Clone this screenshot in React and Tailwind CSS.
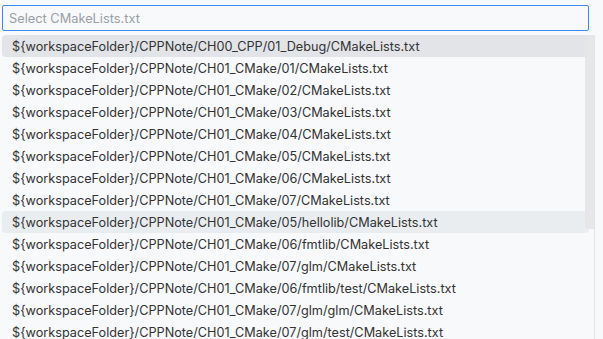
import React from "react";

const files = [
  "${workspaceFolder}/CPPNote/CH00_CPP/01_Debug/CMakeLists.txt",
  "${workspaceFolder}/CPPNote/CH01_CMake/01/CMakeLists.txt",
  "${workspaceFolder}/CPPNote/CH01_CMake/02/CMakeLists.txt",
  "${workspaceFolder}/CPPNote/CH01_CMake/03/CMakeLists.txt",
  "${workspaceFolder}/CPPNote/CH01_CMake/04/CMakeLists.txt",
  "${workspaceFolder}/CPPNote/CH01_CMake/05/CMakeLists.txt",
  "${workspaceFolder}/CPPNote/CH01_CMake/06/CMakeLists.txt",
  "${workspaceFolder}/CPPNote/CH01_CMake/07/CMakeLists.txt",
  "${workspaceFolder}/CPPNote/CH01_CMake/05/hellolib/CMakeLists.txt",
  "${workspaceFolder}/CPPNote/CH01_CMake/06/fmtlib/CMakeLists.txt",
  "${workspaceFolder}/CPPNote/CH01_CMake/07/glm/CMakeLists.txt",
  "${workspaceFolder}/CPPNote/CH01_CMake/06/fmtlib/test/CMakeLists.txt",
  "${workspaceFolder}/CPPNote/CH01_CMake/07/glm/glm/CMakeLists.txt",
  "${workspaceFolder}/CPPNote/CH01_CMake/07/glm/test/CMakeLists.txt",
];

export default function App() {
  return (
    <div
      className="w-[603px] h-[339px] overflow-hidden bg-[#f8f9fb] text-[#333]"
      style={{ fontFamily: "Inter, 'Liberation Sans', sans-serif" }}
    >
      <div className="flex pt-[5px] pl-[2px] pr-[14px]">
        <input
          placeholder="Select CMakeLists.txt"
          className="w-full h-[26px] border border-[#3b8cf4] rounded-[2px] bg-[#f8f9fb] px-[6px] text-[12.8px] outline-none placeholder:text-[#9a9ea5]"
        />
      </div>
      <div className="relative mt-[4px] pl-[2px] pr-[14px]">
        {files.map((f, i) => (
          <div
            key={i}
            className={`h-[22px] flex items-center pl-[10px] pt-[1px] text-[12.7px] rounded-[4px] ${
              i === 0 ? "bg-[#e2e4e8]" : i === 8 ? "bg-[#e9edf0]" : ""
            }`}
          >
            {f}
          </div>
        ))}
        {/* scrollbar overlay */}
        <div className="absolute top-0 bottom-0 right-[8px] w-[10px] border-r border-[#e4e4e7]">
          <div className="h-[194px] bg-[#e4e4e7]/90" />
        </div>
      </div>
    </div>
  );
}
